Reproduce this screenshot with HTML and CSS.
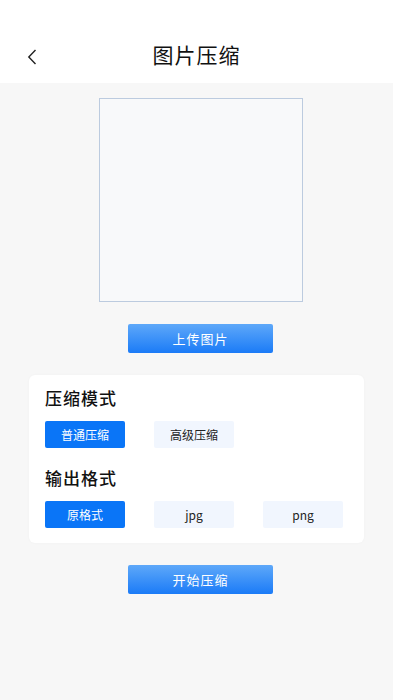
FILE: index.html
```html
<!DOCTYPE html>
<html>
  <head>
    <meta charset="utf-8">
    <title>图片压缩</title>
    <link rel="stylesheet" href="styles.css">
  </head>
  <body>
    <div class="header">
      <span class="back">
        <svg width="10" height="16" viewBox="0 0 10 16"><path d="M8.5 1 L1.8 8 L8.5 15" fill="none" stroke="#222" stroke-width="1.4"/></svg>
      </span>
      <h1 class="title">图片压缩</h1>
    </div>

    <div class="main">
      <div class="preview"></div>
      <button class="btn-primary upload">上传图片</button>

      <div class="card">
        <h3>压缩模式</h3>
        <div class="options">
          <span class="opt active">普通压缩</span>
          <span class="opt">高级压缩</span>
        </div>
        <h3>输出格式</h3>
        <div class="options">
          <span class="opt active">原格式</span>
          <span class="opt">jpg</span>
          <span class="opt">png</span>
        </div>
      </div>

      <button class="btn-primary start">开始压缩</button>
    </div>
  </body>
</html>
```

FILE: styles.css
```css
html, body {
  margin: 0;
  padding: 0;
  background: #f7f7f7;
  font-family: "Noto Sans CJK SC", "Noto Sans", sans-serif;
  color: #111;
}

.header {
  position: relative;
  height: 83px;
  background: #fff;
  box-sizing: border-box;
  padding-top: 37px;
  text-align: center;
}
.header .back {
  position: absolute;
  left: 27px;
  top: 46px;
}
.header .title {
  margin: 0;
  font-size: 21px;
  font-weight: 400;
  line-height: 34px;
  letter-spacing: 1px;
}

.main {
  display: flex;
  flex-direction: column;
  align-items: center;
  padding-top: 15px;
}

/* preview and buttons sit a little right of centre */
.preview {
  width: 202px;
  height: 202px;
  margin-left: 8px;
  border: 1px solid #bccbdf;
  background: #f8f9fa;
}

.btn-primary {
  width: 145px;
  height: 29px;
  margin-left: 8px;
  border: none;
  border-radius: 2px;
  background: linear-gradient(#5ea8f9, #1b7bf7);
  color: #fff;
  font-family: inherit;
  font-size: 13px;
  letter-spacing: 1px;
  padding: 0;
}
.upload { margin-top: 22px; }
.start { margin-top: 22px; }

.card {
  align-self: stretch;
  margin: 22px 29px 0 29px;
  background: #fff;
  border-radius: 6px;
  box-shadow: 0 0 3px rgba(0, 0, 0, 0.03);
  padding: 10px 16px 15px 16px;
}
.card h3 {
  margin: 0;
  font-size: 17px;
  font-weight: 500;
  line-height: 26px;
  letter-spacing: 1px;
}
.card h3 + .options { margin-top: 10px; }
.options + h3 { margin-top: 17px; }

.options {
  display: flex;
  gap: 29px;
}
.opt {
  width: 80px;
  height: 27px;
  line-height: 27px;
  text-align: center;
  font-size: 12px;
  background: #f1f6fe;
  color: #222;
  border-radius: 2px;
}
.opt.active {
  background: #0a75f7;
  color: #fff;
}
```
